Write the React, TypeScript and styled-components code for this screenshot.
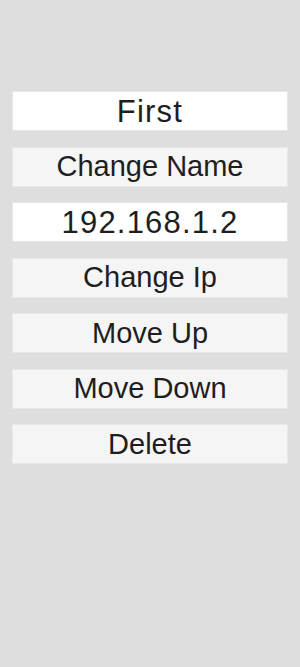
import React from "react";
import styled, { createGlobalStyle } from "styled-components";

const Global = createGlobalStyle`
  html, body { margin: 0; padding: 0; background: #dedede; }
  body { font-family: "Liberation Sans", Arial, sans-serif; }
`;

const Page = styled.div`
  width: 300px;
  min-height: 667px;
  box-sizing: border-box;
  padding: 91px 12px 0;
  display: flex;
  flex-direction: column;
  gap: 15.5px;
`;

const Field = styled.div<{ $button?: boolean }>`
  height: 40px;
  box-sizing: border-box;
  background: ${(p) => (p.$button ? "#f5f5f5" : "#ffffff")};
  border: 1px solid ${(p) => (p.$button ? "#e8e8e8" : "#e6e6e6")};
  display: flex;
  align-items: center;
  justify-content: center;
  font-size: ${(p) => (p.$button ? "29px" : "31px")};
  letter-spacing: ${(p) => (p.$button ? "0" : "1.2px")};
  color: #1e1e1e;
  line-height: 1;
`;

const items: { text: string; button: boolean }[] = [
  { text: "First", button: false },
  { text: "Change Name", button: true },
  { text: "192.168.1.2", button: false },
  { text: "Change Ip", button: true },
  { text: "Move Up", button: true },
  { text: "Move Down", button: true },
  { text: "Delete", button: true },
];

export default function App() {
  return (
    <>
      <Global />
      <Page>
        {items.map((it) => (
          <Field key={it.text} $button={it.button}>
            {it.text}
          </Field>
        ))}
      </Page>
    </>
  );
}
